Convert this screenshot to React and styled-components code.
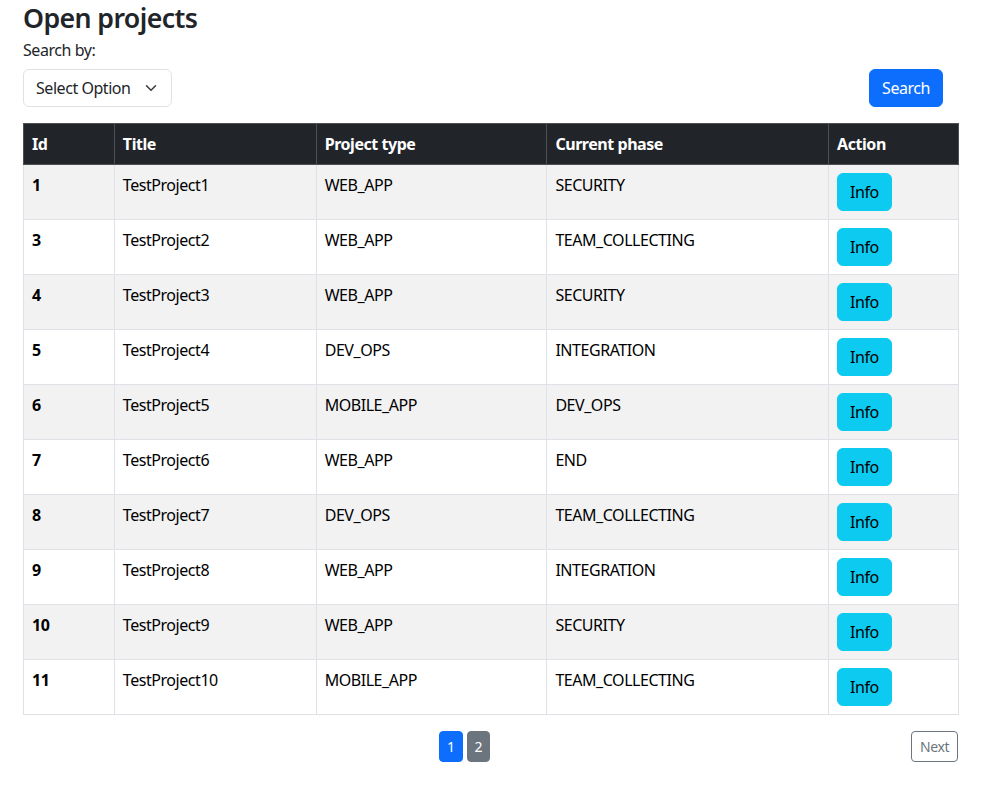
import React from "react";
import styled, { createGlobalStyle } from "styled-components";

const Global = createGlobalStyle`
  * { box-sizing: border-box; }
  body {
    margin: 0;
    background: #fff;
    color: #212529;
    font-family: "Noto Sans", "Open Sans", sans-serif;
    font-size: 16px;
    line-height: 1.5;
    letter-spacing: -0.45px;
  }
`;

const Page = styled.div`
  padding: 2px 28px 0 23px;
  width: 987px;
`;

const Heading = styled.h3`
  margin: 0 0 5px;
  font-size: 26.7px;
  font-weight: 600;
  line-height: 31px;
  letter-spacing: -0.6px;
  color: #212529;
`;

const Label = styled.div`
  font-size: 16px;
  line-height: 24px;
  margin-bottom: 7px;
`;

const Toolbar = styled.div`
  display: flex;
  justify-content: space-between;
  align-items: center;
  padding-right: 16px;
  margin-bottom: 16px;
`;

const SelectBox = styled.div`
  display: flex;
  align-items: center;
  justify-content: space-between;
  width: 149px;
  height: 38px;
  padding: 0 12px 0 12px;
  border: 1px solid #dee2e6;
  border-radius: 6px;
  background: #fff;
  font-size: 16px;
  color: #212529;
`;

const Button = styled.button`
  font-family: inherit;
  letter-spacing: inherit;
  border-radius: 6px;
  border: 1px solid ${(p) => p.$bg};
  background: ${(p) => p.$bg};
  color: ${(p) => p.$fg};
  font-size: 16px;
  line-height: 24px;
  height: 38px;
  padding: 0 12px;
  cursor: pointer;
`;

const Table = styled.table`
  width: 936px;
  border-collapse: collapse;
  font-size: 16px;
`;

const Th = styled.th`
  background: #212529;
  color: #fff;
  font-weight: 700;
  text-align: left;
  padding: 8px;
  line-height: 24px;
  border: 1px solid #4d5154;
  width: ${(p) => p.$w}px;
`;

const Row = styled.tr`
  background: ${(p) => (p.$odd ? "#f2f2f2" : "#fff")};
`;

const Td = styled.td`
  padding: 8px;
  line-height: 24px;
  vertical-align: top;
  border: 1px solid #dee2e6;
  font-weight: ${(p) => (p.$bold ? 700 : 400)};
  color: #000;
`;

const Footer = styled.div`
  display: flex;
  align-items: center;
  width: 936px;
  margin-top: 16px;
`;

const Pages = styled.div`
  display: flex;
  gap: 4px;
  margin-left: 416px;
`;

const SmallBtn = styled.button`
  font-family: inherit;
  letter-spacing: inherit;
  font-size: 14px;
  line-height: 21px;
  height: 31px;
  min-width: 23px;
  padding: 0 ${(p) => (p.$wide ? 8 : 7)}px;
  border-radius: 4px;
  border: 1px solid ${(p) => p.$border};
  background: ${(p) => p.$bg};
  color: ${(p) => p.$fg};
`;

const NextBtn = styled(SmallBtn)`
  margin-left: auto;
  margin-right: 1px;
`;

const rows = [
  [1, "TestProject1", "WEB_APP", "SECURITY"],
  [3, "TestProject2", "WEB_APP", "TEAM_COLLECTING"],
  [4, "TestProject3", "WEB_APP", "SECURITY"],
  [5, "TestProject4", "DEV_OPS", "INTEGRATION"],
  [6, "TestProject5", "MOBILE_APP", "DEV_OPS"],
  [7, "TestProject6", "WEB_APP", "END"],
  [8, "TestProject7", "DEV_OPS", "TEAM_COLLECTING"],
  [9, "TestProject8", "WEB_APP", "INTEGRATION"],
  [10, "TestProject9", "WEB_APP", "SECURITY"],
  [11, "TestProject10", "MOBILE_APP", "TEAM_COLLECTING"],
];

const Chevron = () => (
  <svg width="16" height="12" viewBox="0 0 16 16" fill="none">
    <path d="m2 5 6 6 6-6" stroke="#343a40" strokeWidth="2" strokeLinecap="round" strokeLinejoin="round" />
  </svg>
);

export default function App() {
  return (
    <Page>
      <Global />
      <Heading>Open projects</Heading>
      <Label>Search by:</Label>
      <Toolbar>
        <SelectBox>
          <span>Select Option</span>
          <Chevron />
        </SelectBox>
        <Button $bg="#0d6efd" $fg="#fff">Search</Button>
      </Toolbar>
      <Table>
        <thead>
          <tr>
            <Th $w={91}>Id</Th>
            <Th $w={202}>Title</Th>
            <Th $w={231}>Project type</Th>
            <Th $w={282}>Current phase</Th>
            <Th $w={130}>Action</Th>
          </tr>
        </thead>
        <tbody>
          {rows.map((r, i) => (
            <Row key={r[0]} $odd={i % 2 === 0}>
              <Td $bold>{r[0]}</Td>
              <Td>{r[1]}</Td>
              <Td>{r[2]}</Td>
              <Td>{r[3]}</Td>
              <Td>
                <Button $bg="#0dcaf0" $fg="#000">Info</Button>
              </Td>
            </Row>
          ))}
        </tbody>
      </Table>
      <Footer>
        <Pages>
          <SmallBtn $bg="#0d6efd" $border="#0d6efd" $fg="#fff">1</SmallBtn>
          <SmallBtn $bg="#6c757d" $border="#6c757d" $fg="#fff">2</SmallBtn>
        </Pages>
        <NextBtn $wide $bg="#fff" $border="#6c757d" $fg="#6c757d">Next</NextBtn>
      </Footer>
    </Page>
  );
}
